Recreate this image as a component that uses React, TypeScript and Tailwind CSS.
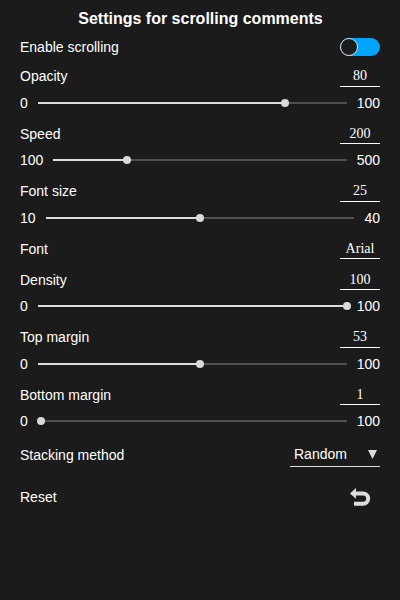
import React from "react";

function Value({ children }: { children: React.ReactNode }) {
  return (
    <div className="h-[21px] w-10 border-b border-white pt-[0.3px] text-center font-['Liberation_Serif',serif] text-[14px] leading-5">
      {children}
    </div>
  );
}

type SliderProps = {
  label: string;
  value: number;
  min: number;
  max: number;
  percent: number;
};

function SliderSetting({ label, value, min, max, percent }: SliderProps) {
  return (
    <section className="h-[57.5px]">
      <div className="flex h-[21px] justify-between">
        <span className="pt-[0.3px] leading-[21px]">{label}</span>
        <Value>{value}</Value>
      </div>
      <div className="mt-[6px] flex h-5 items-center gap-[10px] leading-5">
        <span>{min}</span>
        <div className="relative h-[2px] flex-1 bg-[#505050]">
          <div className="h-full bg-[#dddddd]" style={{ width: `${percent}%` }} />
          <div
            className="absolute top-[-3px] -ml-1 size-2 rounded-full bg-[#d9d9d9]"
            style={{ left: `${percent}%` }}
          />
        </div>
        <span>{max}</span>
      </div>
    </section>
  );
}

export default function App() {
  return (
    <main className="h-[600px] w-[400px] bg-[#1b1b1b] px-5 font-['Liberation_Sans',Arial,sans-serif] text-[14px] text-white">
      <h1 className="h-[37px] pt-[9px] pl-px text-center text-[16px] leading-5 font-bold">
        Settings for scrolling comments
      </h1>
      <div className="flex h-[28.75px] justify-between pt-px">
        <span className="leading-[18px]">Enable scrolling</span>
        <div className="h-[18px] w-10 rounded-full bg-[#00a5ff]">
          <div className="size-[18px] rounded-full border border-[#dddddd] bg-[#1b1b1b]" />
        </div>
      </div>
      <SliderSetting label="Opacity" value={80} min={0} max={100} percent={80} />
      <SliderSetting label="Speed" value={200} min={100} max={500} percent={25} />
      <SliderSetting label="Font size" value={25} min={10} max={40} percent={50} />
      <div className="flex h-[31px] justify-between">
        <span className="pt-[0.3px] leading-[21px]">Font</span>
        <Value>Arial</Value>
      </div>
      <SliderSetting label="Density" value={100} min={0} max={100} percent={100} />
      <SliderSetting label="Top margin" value={53} min={0} max={100} percent={52.5} />
      <SliderSetting label="Bottom margin" value={1} min={0} max={100} percent={1} />
      <div className="flex h-[45.25px] justify-between">
        <span className="pt-[3px] leading-5">Stacking method</span>
        <div className="flex h-[25px] w-[90px] justify-between border-b border-[#dddddd] pr-[3.5px] pl-1 leading-6">
          <span>Random</span>
          <svg className="mt-2 h-[9px] w-[9px]" viewBox="0 0 9 9" fill="#dddddd">
            <path d="M0 0H9L4.5 9Z" />
          </svg>
        </div>
      </div>
      <div className="flex h-5 items-center justify-between">
        <span>Reset</span>
        <svg className="mr-[9px] h-[18px] w-[21px]" viewBox="0 0 21 18" fill="none">
          <path d="M0 5.4L6 0V10.8Z" fill="#dddddd" />
          <path d="M4 5.4H13A5.2 5.2 0 0 1 13 15.8H4" stroke="#dddddd" strokeWidth="4" />
        </svg>
      </div>
    </main>
  );
}
